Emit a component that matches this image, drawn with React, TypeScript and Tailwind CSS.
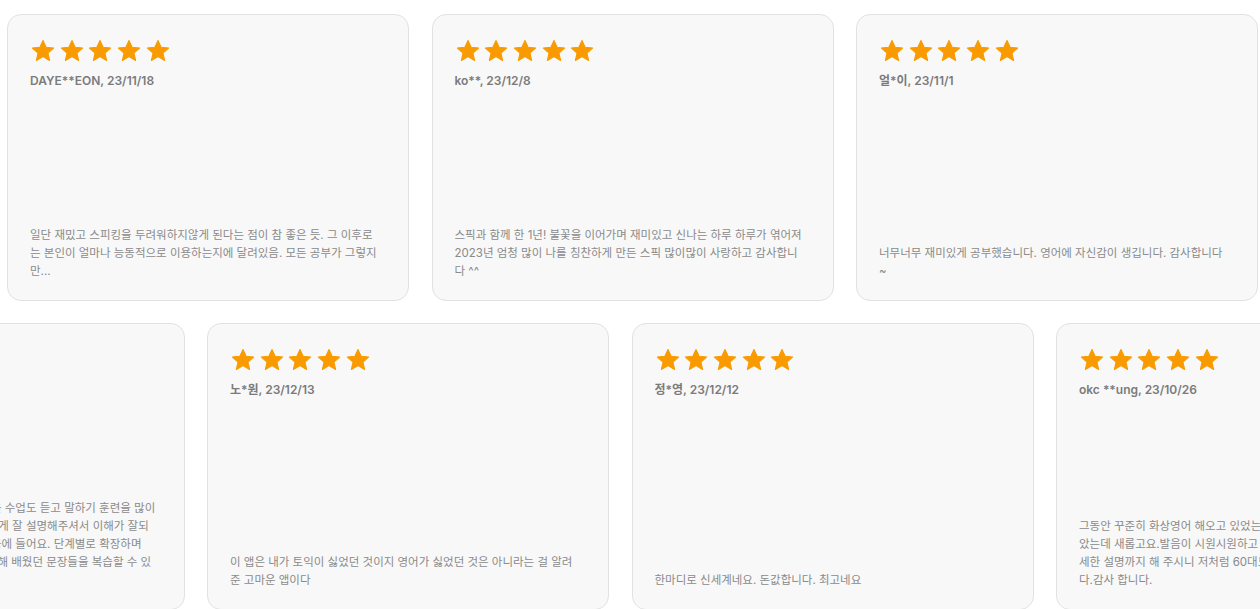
import React from 'react';

type Review = {
  name: string;
  lines: string[];
};

const topRow: Review[] = [
  {
    name: 'DAYE**EON, 23/11/18',
    lines: [
      '일단 재밌고 스피킹을 두려워하지않게 된다는 점이 참 좋은 듯. 그 이후로',
      '는 본인이 얼마나 능동적으로 이용하는지에 달려있음. 모든 공부가 그렇지',
      '만...',
    ],
  },
  {
    name: 'ko**, 23/12/8',
    lines: [
      '스픽과 함께 한 1년! 불꽃을 이어가며 재미있고 신나는 하루 하루가 엮어져',
      '2023년 엄청 많이 나를 칭찬하게 만든 스픽 많이많이 사랑하고 감사합니',
      '다 ^^',
    ],
  },
  {
    name: '얼*이, 23/11/1',
    lines: ['너무너무 재미있게 공부했습니다. 영어에 자신감이 생깁니다. 감사합니다', '~'],
  },
];

const bottomRow: Review[] = [
  {
    name: '김*진, 23/12/2',
    lines: [
      '매일 출근길에 꼭 재미있는 강의 영상들을 수업도 듣고 말하기 훈련을 많이',
      '선생님들께서 어려운 표현도 이해하기 쉽게 잘 설명해주셔서 이해가 잘되',
      '었고 무엇보다 강의들의 구성이 정말 마음에 들어요. 단계별로 확장하며',
      '말하는 연습도 할 수 있고 반복 학습을 통해 배웠던 문장들을 복습할 수 있',
      '어서 정말 좋아요!',
    ],
  },
  {
    name: '노*원, 23/12/13',
    lines: ['이 앱은 내가 토익이 싫었던 것이지 영어가 싫었던 것은 아니라는 걸 알려', '준 고마운 앱이다'],
  },
  {
    name: '정*영, 23/12/12',
    lines: ['한마디로 신세계네요. 돈값합니다. 최고네요'],
  },
  {
    name: 'okc **ung, 23/10/26',
    lines: [
      '그동안 꾸준히 화상영어 해오고 있었는데 스픽은 처음 써보',
      '았는데 새롭고요.발음이 시원시원하고 자',
      '세한 설명까지 해 주시니 저처럼 60대도 쉽게 따라할 수 있습니',
      '다.감사 합니다.',
    ],
  },
];

const Star = () => (
  <svg viewBox="0 0 24 24" className="w-[26px] h-[26px] shrink-0" fill="#f99b00">
    <path
      d="M12 2.3l2.9 6.3 6.9.7-5.2 4.6 1.5 6.8L12 17.2l-6.1 3.5 1.5-6.8-5.2-4.6 6.9-.7z"
      stroke="#f99b00"
      strokeWidth="1"
      strokeLinejoin="round"
    />
  </svg>
);

const ReviewCard: React.FC<{ review: Review }> = ({ review }) => (
  <div className="w-[402px] h-[287px] shrink-0 rounded-[14px] border border-[#e2e2e2] bg-[#f8f8f8] px-[22px] pt-[23px] pb-[20px] flex flex-col justify-between">
    <div>
      <div className="flex gap-[2.7px]">
        <Star />
        <Star />
        <Star />
        <Star />
        <Star />
      </div>
      <div className="mt-[9px] text-[12px] leading-4 font-semibold text-[#7b7b7b]">{review.name}</div>
    </div>
    <div className="text-[11.5px] leading-[18px] text-[#8a8a8a]">
      {review.lines.map((line, i) => (
        <div key={i} className="whitespace-pre">
          {line}
        </div>
      ))}
    </div>
  </div>
);

export default function App() {
  return (
    <div
      className="w-full h-screen overflow-hidden bg-white pt-[14px] flex flex-col gap-[22px]"
      style={{ fontFamily: "Inter, 'Noto Sans CJK KR', sans-serif" }}
    >
      <div className="flex gap-[22.5px] ml-[7px]">
        {topRow.map((r) => (
          <ReviewCard key={r.name} review={r} />
        ))}
      </div>
      <div className="flex gap-[22.5px] ml-[-217.5px]">
        {bottomRow.map((r) => (
          <ReviewCard key={r.name} review={r} />
        ))}
      </div>
    </div>
  );
}
